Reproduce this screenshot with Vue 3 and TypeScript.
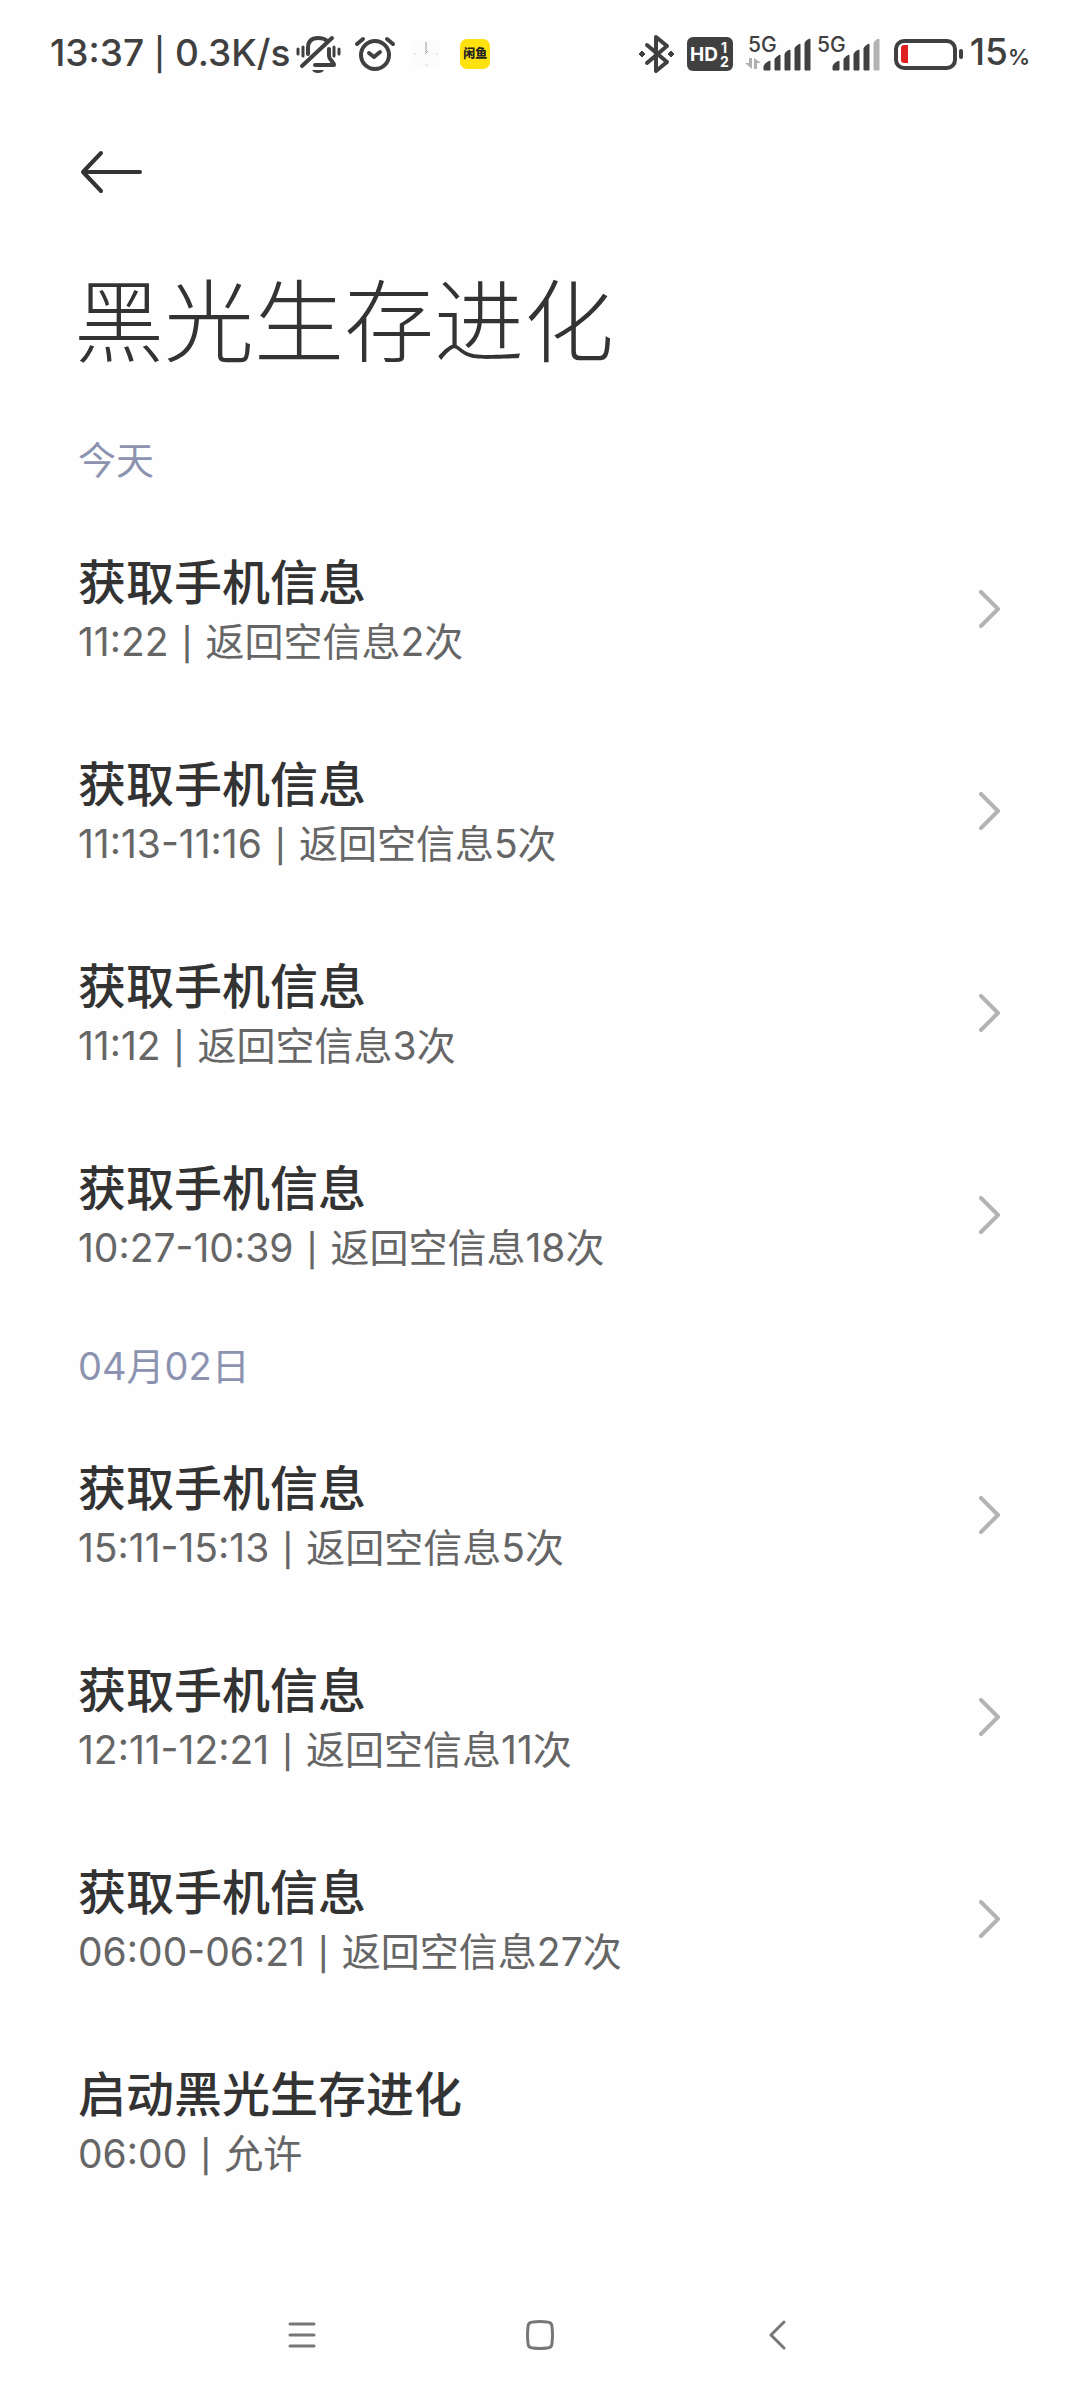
<script setup lang="ts">
interface PermissionRecord {
  title: string
  time: string
  result: string
  hasDetail: boolean
}

interface RecordGroup {
  label: string
  records: PermissionRecord[]
}

interface SignalState {
  id: number
  active: number
  showData: boolean
}

const appName = '黑光生存进化'

const groups: RecordGroup[] = [
  {
    label: '今天',
    records: [
      { title: '获取手机信息', time: '11:22', result: '返回空信息2次', hasDetail: true },
      { title: '获取手机信息', time: '11:13-11:16', result: '返回空信息5次', hasDetail: true },
      { title: '获取手机信息', time: '11:12', result: '返回空信息3次', hasDetail: true },
      { title: '获取手机信息', time: '10:27-10:39', result: '返回空信息18次', hasDetail: true },
    ],
  },
  {
    label: '04月02日',
    records: [
      { title: '获取手机信息', time: '15:11-15:13', result: '返回空信息5次', hasDetail: true },
      { title: '获取手机信息', time: '12:11-12:21', result: '返回空信息11次', hasDetail: true },
      { title: '获取手机信息', time: '06:00-06:21', result: '返回空信息27次', hasDetail: true },
      { title: '启动黑光生存进化', time: '06:00', result: '允许', hasDetail: false },
    ],
  },
]

const signals: SignalState[] = [
  { id: 1, active: 5, showData: true },
  { id: 2, active: 4, showData: false },
]

const signalBars: string[] = [
  'M19 42V38Q20 35 25 33V42Z',
  'M30 42V31Q31 29 35 27V42Z',
  'M40 42V26Q41 23 45 22V42Z',
  'M50 42V20Q51 18 55 16V42Z',
  'M60 42V15Q61 12 65 11V42Z',
]
</script>

<template>
  <div class="screen">
    <div class="status-bar">
      <div class="status-left">
        <span class="clock">13:37 <span class="bar">|</span> 0.3K/s</span>
        <svg class="bell" width="46" height="40" viewBox="0 0 46 40" aria-hidden="true">
          <g fill="none" stroke="#404040" stroke-width="4" stroke-linecap="round" stroke-linejoin="round">
            <path d="M12 20V14C12 7 16 4 22 4C26 4 29 5 31 7" />
            <path d="M33 15V22C33 26 38 28 38 31H19" />
            <path d="M36 4L6 32" />
            <path d="M2 15V20M7 13V22M38 13V22M43 15V20" stroke-width="3" />
          </g>
          <path d="M16 36H28C27 38 25 39 22 39S17 38 16 36Z" fill="#404040" />
        </svg>
        <svg class="alarm" width="42" height="40" viewBox="0 0 42 40" aria-hidden="true">
          <g fill="none" stroke="#404040" stroke-width="4" stroke-linecap="round" stroke-linejoin="round">
            <circle cx="21" cy="21" r="14" />
            <path d="M15 19L20 23L26 18M3 10L9 5M33 5L39 10" />
          </g>
        </svg>
        <svg class="mini-clock" width="28" height="28" viewBox="0 0 28 28" aria-hidden="true">
          <rect width="28" height="28" rx="5" fill="#fbfbfb" />
          <path d="M14 2V12" stroke="#999" stroke-width="1" />
          <path d="M13 14L16 11" stroke="#999" stroke-width="1" />
          <path d="M2 14H4M24 14H26M13 25H16" stroke="#ddd" stroke-width="1" />
        </svg>
        <span class="app-badge">闲鱼</span>
      </div>

      <div class="status-right">
        <svg class="bluetooth" width="38" height="40" viewBox="0 0 38 40" aria-hidden="true">
          <path
            d="M9 11L29 28L18 37V3L29 12L9 29"
            fill="none"
            stroke="#404040"
            stroke-width="4"
            stroke-linecap="round"
            stroke-linejoin="round"
          />
          <path d="M1 20L4 17L7 20L4 23ZM30 20L33 17L36 20L33 23Z" fill="#404040" stroke="#404040" stroke-width="1" stroke-linejoin="round" />
        </svg>
        <svg class="hd" width="46" height="40" viewBox="0 0 46 40" aria-hidden="true">
          <rect y="3" width="46" height="34" rx="6" fill="#404040" />
          <g class="hd-text" fill="#fff">
            <text x="3" y="27" font-size="19">HD</text>
            <text x="34" y="19" font-size="14">1</text>
            <text x="33" y="33" font-size="14">2</text>
          </g>
        </svg>
        <svg
          v-for="signal in signals"
          :key="signal.id"
          class="signal"
          width="67"
          height="52"
          viewBox="0 0 67 52"
          aria-hidden="true"
        >
          <text class="signal-text" x="3" y="24" fill="#404040">5G</text>
          <g v-if="signal.showData" fill="#b0b0b0">
            <path d="M4 30H7V41L0 35H4Z" />
            <path d="M9 41V30L16 35H12V41Z" />
          </g>
          <path
            v-for="(bar, index) in signalBars"
            :key="index"
            :d="bar"
            :fill="index < signal.active ? '#404040' : '#b3b3b3'"
            :stroke="index < signal.active ? '#404040' : '#b3b3b3'"
            stroke-width="1"
            stroke-linejoin="round"
          />
        </svg>
        <svg class="battery" width="70" height="40" viewBox="0 0 70 40" aria-hidden="true">
          <rect x="2" y="7" width="59" height="27" rx="8" fill="none" stroke="#404040" stroke-width="4" />
          <path d="M14 11V29H10Q7 29 7 26V14Q7 11 10 11Z" fill="#e02020" />
          <rect x="65" y="15" width="4" height="10" rx="2" fill="#404040" />
        </svg>
        <span class="charge">15<span class="percent">%</span></span>
      </div>
    </div>

    <header class="header">
      <button class="back" type="button" aria-label="返回">
        <svg width="62" height="44" viewBox="0 0 62 44" aria-hidden="true">
          <path d="M21 3L3 22L21 41M3 22H60" fill="none" stroke="#333" stroke-width="4" stroke-linecap="round" stroke-linejoin="round" />
        </svg>
      </button>
      <h1 class="title">{{ appName }}</h1>
    </header>

    <main>
      <section v-for="group in groups" :key="group.label">
        <h2 class="group-label">{{ group.label }}</h2>
        <ul class="records">
          <li v-for="(record, index) in group.records" :key="index">
            <component
              :is="record.hasDetail ? 'button' : 'div'"
              class="record"
              :type="record.hasDetail ? 'button' : undefined"
            >
              <span class="record-text">
                <span class="record-title">{{ record.title }}</span>
                <span class="record-detail">{{ record.time }} <span class="bar">|</span> {{ record.result }}</span>
              </span>
              <svg v-if="record.hasDetail" class="chevron" width="22" height="38" viewBox="0 0 22 38" aria-hidden="true">
                <path d="M2 2L19 19L2 36" fill="none" stroke="#b3b3b3" stroke-width="4" stroke-linecap="round" stroke-linejoin="round" />
              </svg>
            </component>
          </li>
        </ul>
      </section>
    </main>

    <nav class="nav-bar">
      <button type="button" aria-label="最近任务">
        <svg width="28" height="30" viewBox="0 0 28 30" aria-hidden="true">
          <path d="M2 4H26M2 15H26M2 26H26" fill="none" stroke="#777" stroke-width="3" stroke-linecap="round" />
        </svg>
      </button>
      <button type="button" aria-label="主屏幕">
        <svg width="28" height="30" viewBox="0 0 28 30" aria-hidden="true">
          <path
            d="M7 2Q14 1 21 2Q26 2 26 7Q27 15 26 23Q26 28 21 28Q14 29 7 28Q2 28 2 23Q1 15 2 7Q2 2 7 2Z"
            fill="none"
            stroke="#777"
            stroke-width="3"
          />
        </svg>
      </button>
      <button type="button" aria-label="返回上一页">
        <svg width="28" height="30" viewBox="0 0 28 30" aria-hidden="true">
          <path d="M20 2L7 15L20 28" fill="none" stroke="#777" stroke-width="3" stroke-linecap="round" stroke-linejoin="round" />
        </svg>
      </button>
    </nav>
  </div>
</template>

<style>
body {
  background: #fefefe;
}
</style>

<style scoped>
.screen,
.screen * {
  box-sizing: border-box;
}

.screen {
  display: flex;
  flex-direction: column;
  min-height: 100vh;
  background: #fefefe;
  color: #333;
  font-family: Inter, "Noto Sans CJK SC", sans-serif;
}

button {
  margin: 0;
  padding: 0;
  border: 0;
  background: none;
  color: inherit;
  font: inherit;
  text-align: left;
  cursor: pointer;
}

svg {
  display: block;
  flex: none;
}

.status-bar {
  display: flex;
  align-items: center;
  justify-content: space-between;
  height: 108px;
  padding: 0 50px;
  color: #404040;
}

.status-left,
.status-right {
  display: flex;
  align-items: center;
  white-space: nowrap;
}

.clock,
.charge {
  font-size: 37px;
  line-height: 44px;
  font-weight: 500;
}

.bar {
  font-size: 32px;
  font-weight: 500;
}

.bell {
  margin-left: 6px;
}

.alarm {
  margin-left: 12px;
}

.mini-clock {
  margin-left: 16px;
}

.app-badge {
  display: flex;
  align-items: center;
  justify-content: center;
  width: 30px;
  height: 30px;
  margin-left: 20px;
  border-radius: 7px;
  background: #ffe10f;
  color: #222;
  font-size: 12px;
  line-height: 12px;
  font-weight: 900;
}

.hd {
  margin-left: 11px;
}

.hd-text {
  font-weight: 700;
}

.signal {
  margin-left: 2px;
}

.hd + .signal {
  margin-left: 12px;
}

.signal-text {
  font-size: 21px;
  font-weight: 500;
}

.battery {
  margin-left: 13px;
}

.charge {
  margin-left: 6px;
}

.percent {
  font-size: 22px;
  font-weight: 600;
}

.header {
  padding: 42px 80px 26px;
}

.back {
  display: block;
}

.title {
  margin: 68px 0 0 -6px;
  font-size: 90px;
  line-height: 122px;
  font-weight: 300;
}

.group-label {
  display: flex;
  align-items: center;
  height: 98px;
  margin: 0;
  padding: 0 78px 4px;
  color: #8c93b0;
  font-size: 38px;
  font-weight: 400;
}

.records {
  margin: 0;
  padding: 0;
  list-style: none;
}

.record {
  display: flex;
  align-items: center;
  justify-content: space-between;
  width: 100%;
  height: 202px;
  padding: 0 79px 0 78px;
}

.record-text {
  display: flex;
  flex-direction: column;
  padding-top: 4px;
}

.record-title {
  font-size: 48px;
  line-height: 64px;
  font-weight: 500;
}

.record-detail {
  color: #666;
  font-size: 39px;
  line-height: 54px;
}

.record-detail .bar {
  margin: 0 2px;
}

.nav-bar {
  display: flex;
  height: 130px;
  margin-top: auto;
  padding: 0 17%;
}

.nav-bar button {
  display: flex;
  flex: 1;
  align-items: center;
  justify-content: center;
}
</style>
